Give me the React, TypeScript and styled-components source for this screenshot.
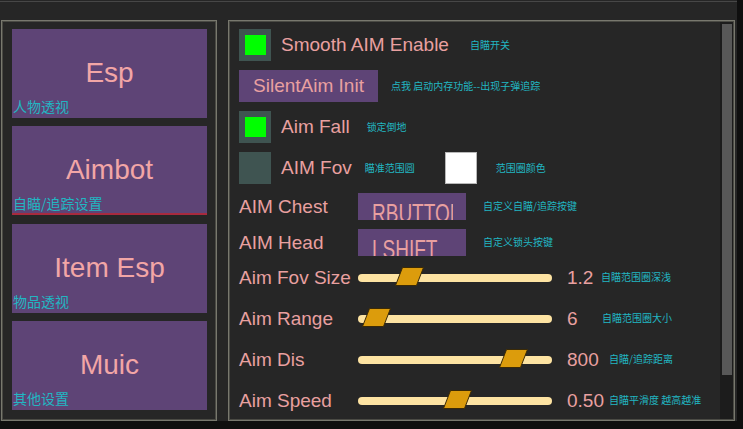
import React from "react";
import styled, { createGlobalStyle } from "styled-components";

const PINK = "#e9a0a0";
const CYAN = "#22b6c2";
const PURPLE = "#5e4476";
const FONT = `"Liberation Sans", Arial, "Noto Sans CJK SC", sans-serif`;
const CJK = `"Noto Sans CJK SC", "Liberation Sans", sans-serif`;

const Global = createGlobalStyle`
  html, body { margin: 0; padding: 0; background: #0f0f0f; }
  body { width: 743px; height: 429px; overflow: hidden; font-family: ${FONT}; }
`;

const Frame = styled.div`
  width: 737px;
  height: 421px;
  background: #262626;
  display: flex;
  flex-direction: column;
`;

const TitleBar = styled.div`
  flex: none;
  margin-top: 1px;
  height: 18px;
  border-top: 1px solid #474747;
`;

const Body = styled.div`
  display: flex;
  gap: 11px;
  padding-left: 1px;
  height: 401px;
`;

const Panel = styled.div`
  box-sizing: border-box;
  height: 100%;
  border: 1px solid #78786e;
  box-shadow: inset 0 0 0 1px #4a4a44;
`;

const NavPanel = styled(Panel)`
  width: 216px;
  padding: 8px 9px 0 10px;
  display: flex;
  flex-direction: column;
  gap: 8.3px;
`;

const NavButton = styled.div<{ $active?: boolean }>`
  height: 89px;
  flex: none;
  background: ${PURPLE};
  display: grid;
  box-shadow: ${(p) => (p.$active ? "inset 0 -2px 0 #a82a3e" : "none")};
`;

const NavTitle = styled.span`
  grid-area: 1 / 1;
  place-self: center;
  margin-top: -1px;
  font-family: ${FONT};
  font-size: 28px;
  color: #f2a6a6;
`;

const NavCaption = styled.span`
  grid-area: 1 / 1;
  align-self: end;
  justify-self: start;
  margin: 0 0 4px 1px;
  font-family: ${CJK};
  font-size: 14px;
  line-height: 16px;
  color: ${CYAN};
`;

const MainPanel = styled(Panel)`
  width: 507px;
  display: flex;
`;

const Content = styled.div`
  flex: 1;
  padding: 8px 0 0 10px;
  display: flex;
  flex-direction: column;
`;

const TopRows = styled.div`
  display: flex;
  flex-direction: column;
  gap: 9px;
`;

const Row = styled.div<{ $h: number }>`
  display: flex;
  align-items: center;
  height: ${(p) => p.$h}px;
`;

const CheckBox = styled.div`
  box-sizing: border-box;
  width: 32px;
  height: 32px;
  padding: 6px;
  background: #3f5451;
  flex: none;
`;

const Tick = styled.div`
  width: 21px;
  height: 20px;
  background: #00ff00;
`;

const Label = styled.span<{ $ml?: number }>`
  margin-left: ${(p) => p.$ml ?? 0}px;
  font-family: ${FONT};
  font-size: 19px;
  color: ${PINK};
  white-space: nowrap;
`;

const Note = styled.span<{ $ml: number }>`
  margin-left: ${(p) => p.$ml}px;
  font-family: ${CJK};
  font-size: 10px;
  line-height: 12px;
  margin-top: -1px;
  color: ${CYAN};
  white-space: nowrap;
`;

const ActionButton = styled.div`
  width: 139px;
  height: 32px;
  background: ${PURPLE};
  display: flex;
  align-items: center;
  justify-content: center;
  font-family: ${FONT};
  font-size: 19px;
  color: ${PINK};
`;

const Swatch = styled.div<{ $ml: number }>`
  box-sizing: border-box;
  margin-left: ${(p) => p.$ml}px;
  width: 32px;
  height: 32px;
  background: #ffffff;
  border: 1px solid #b8b8b8;
`;

const LabelCol = styled.div`
  width: 119px;
  flex: none;
  display: flex;
  align-items: center;
`;

const KeyBox = styled.div`
  box-sizing: border-box;
  width: 108px;
  height: 27px;
  padding: 7px 0 0 14px;
  background: ${PURPLE};
  overflow: hidden;
`;

const KeyText = styled.div`
  width: 81px;
  overflow: hidden;
  white-space: nowrap;
  font-family: ${FONT};
  font-size: 19px;
  line-height: 19px;
  color: ${PINK};
  transform: scaleY(1.38);
  transform-origin: top left;
`;

const Sliders = styled.div`
  padding-top: 1px;
  display: flex;
  flex-direction: column;
`;

const SliderRow = styled.div`
  height: 41px;
  display: flex;
  align-items: center;
`;

const Track = styled.div`
  position: relative;
  width: 194px;
  height: 8px;
  border-radius: 4px;
  background: #fde3a2;
  flex: none;
`;

const Thumb = styled.svg`
  position: absolute;
  top: -6.5px;
  width: 29px;
  height: 19px;
`;

const Value = styled.span<{ $w: number }>`
  margin-left: 15px;
  width: ${(p) => p.$w}px;
  flex: none;
  font-family: ${FONT};
  font-size: 19px;
  color: ${PINK};
  white-space: nowrap;
`;

const ScrollTrack = styled.div`
  width: 13px;
  margin: 1px 1px 1px 0;
  padding: 2px 1px 0 2px;
  box-sizing: border-box;
  background: #1c1c1c;
  flex: none;
`;

const ScrollThumb = styled.div`
  height: 351px;
  background: #585858;
`;

const navItems = [
  { title: "Esp", caption: "人物透视" },
  { title: "Aimbot", caption: "自瞄/追踪设置", active: true },
  { title: "Item Esp", caption: "物品透视" },
  { title: "Muic", caption: "其他设置" },
];

const sliders = [
  { label: "Aim Fov Size", value: "1.2", t: 0.224, note: "自瞄范围圈深浅", w: 34 },
  { label: "Aim Range", value: "6", t: 0.024, note: "自瞄范围圈大小", w: 35 },
  { label: "Aim Dis", value: "800", t: 0.855, note: "自瞄/追踪距离", w: 42 },
  { label: "Aim Speed", value: "0.50", t: 0.515, note: "自瞄平滑度 越高越准", w: 42 },
];

const TRACK_W = 194;
const THUMB_W = 29;

function Slider({ t }: { t: number }) {
  const left = Math.round(t * (TRACK_W - THUMB_W));
  return (
    <Track>
      <Thumb viewBox="0 0 29 19" style={{ left }}>
        <polygon points="7.5,0.5 28.5,0.5 21.5,18.5 0.5,18.5" fill="#dc9c0c" stroke="#3b2a06" strokeWidth="1" />
      </Thumb>
    </Track>
  );
}

export default function App() {
  return (
    <>
      <Global />
      <Frame>
        <TitleBar />
        <Body>
          <NavPanel>
            {navItems.map((n) => (
              <NavButton key={n.title} $active={n.active}>
                <NavTitle>{n.title}</NavTitle>
                <NavCaption>{n.caption}</NavCaption>
              </NavButton>
            ))}
          </NavPanel>
          <MainPanel>
            <Content>
              <TopRows>
                <Row $h={32}>
                  <CheckBox><Tick /></CheckBox>
                  <Label $ml={10}>Smooth AIM Enable</Label>
                  <Note $ml={21}>自瞄开关</Note>
                </Row>
                <Row $h={32}>
                  <ActionButton>SilentAim Init</ActionButton>
                  <Note $ml={13}>点我 启动内存功能--出现子弹追踪</Note>
                </Row>
                <Row $h={32}>
                  <CheckBox><Tick /></CheckBox>
                  <Label $ml={10}>Aim Fall</Label>
                  <Note $ml={17}>锁定倒地</Note>
                </Row>
                <Row $h={32}>
                  <CheckBox />
                  <Label $ml={10}>AIM Fov</Label>
                  <Note $ml={13}>瞄准范围圆</Note>
                  <Swatch $ml={30} />
                  <Note $ml={19}>范围圈颜色</Note>
                </Row>
                <Row $h={27}>
                  <LabelCol><Label>AIM Chest</Label></LabelCol>
                  <KeyBox><KeyText>RBUTTON</KeyText></KeyBox>
                  <Note $ml={17}>自定义自瞄/追踪按键</Note>
                </Row>
                <Row $h={27}>
                  <LabelCol><Label>AIM Head</Label></LabelCol>
                  <KeyBox><KeyText>LSHIFT</KeyText></KeyBox>
                  <Note $ml={17}>自定义锁头按键</Note>
                </Row>
              </TopRows>
              <Sliders>
                {sliders.map((s) => (
                  <SliderRow key={s.label}>
                    <LabelCol><Label>{s.label}</Label></LabelCol>
                    <Slider t={s.t} />
                    <Value $w={s.w}>{s.value}</Value>
                    <Note $ml={0}>{s.note}</Note>
                  </SliderRow>
                ))}
              </Sliders>
            </Content>
            <ScrollTrack>
              <ScrollThumb />
            </ScrollTrack>
          </MainPanel>
        </Body>
      </Frame>
    </>
  );
}
